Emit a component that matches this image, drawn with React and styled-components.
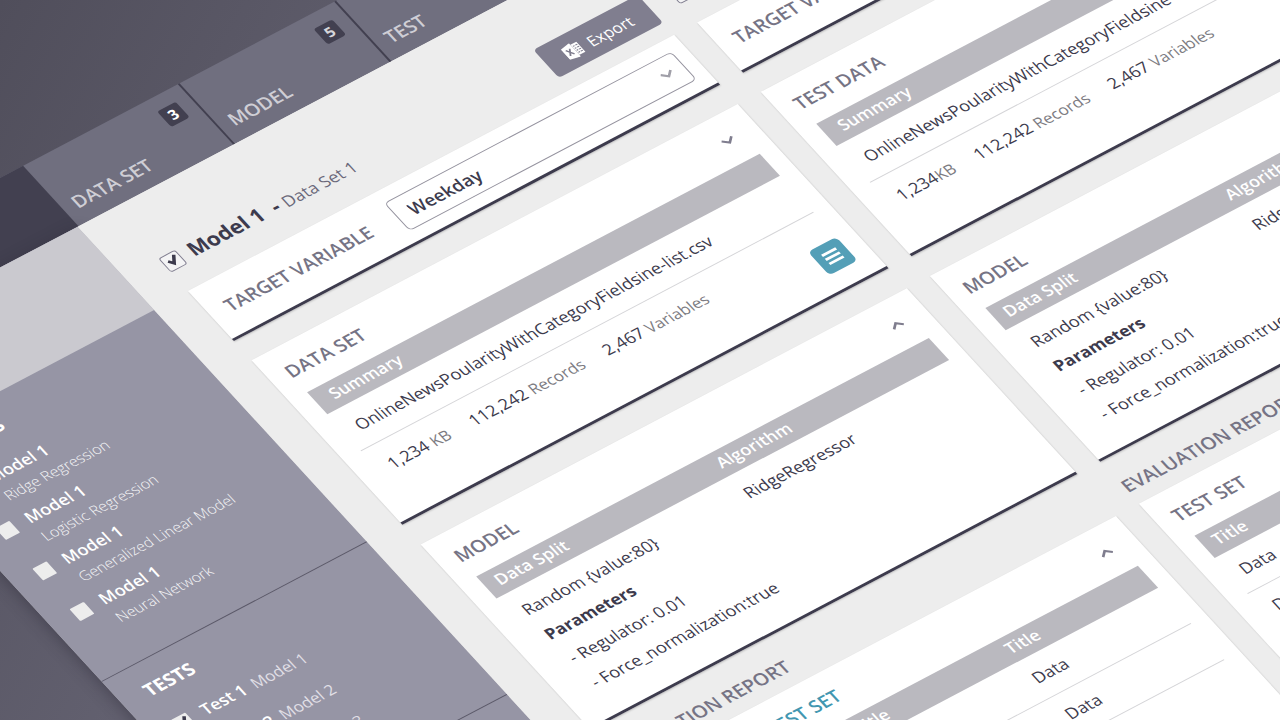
import { useState } from 'react'
import styled, { createGlobalStyle } from 'styled-components'

const GlobalStyle = createGlobalStyle`
  * {
    box-sizing: border-box;
  }
  body {
    margin: 0;
    overflow: hidden;
    font-family: 'Open Sans', 'Noto Sans', sans-serif;
    color: #3d3b4d;
  }
  h1, h2, p, ul {
    margin: 0;
    padding: 0;
  }
`

const Scene = styled.div`
  height: 100vh;
  overflow: hidden;
  background: linear-gradient(118deg, #504e5b 0%, #62606f 30%, #605f6e 100%);
`

// the whole dashboard lies on one tilted plane
const Plane = styled.div`
  width: calc(100vw + 223px);
  transform-origin: 0 0;
  transform: matrix(0.884, -0.466, 0.6765, 0.737, -243, 306);
`

const Header = styled.header`
  display: flex;
  height: 82px;
  background: #706f7f;
`

const Brand = styled.div`
  flex: 0 0 301px;
  background: #424050;
`

const Tab = styled.a`
  display: flex;
  flex-direction: column;
  justify-content: space-between;
  width: 177px;
  padding: 15px 14px 11px 12px;
  border-right: 2px solid #424050;
  font-size: 19px;
  font-weight: 600;
  line-height: 24px;
  color: #cfced5;
  text-decoration: none;
`

const Badge = styled.span`
  align-self: flex-end;
  width: 21px;
  height: 21px;
  border-radius: 3px;
  background: #424050;
  color: ${props => props.$active ? '#ffffff' : '#d6d5da'};
  font-size: 15px;
  font-weight: 700;
  line-height: 21px;
  text-align: center;
`

const Main = styled.div`
  display: flex;
  background: #ededed;
`

const Sidebar = styled.aside`
  flex: 0 0 300px;
  background: #9695a5;
  color: #ffffff;
  box-shadow: -2px 4px 16px rgba(40, 38, 52, 0.45);
`

const SideTop = styled.div`
  height: 113px;
  background: #cac9cf;
`

const SideSection = styled.section`
  padding: 18px 26px ${props => props.$tight ? '18px' : '32px'};
  border-bottom: 1px solid #5b5969;
`

const SideTitle = styled.h2`
  font-size: 19px;
  font-weight: 700;
  line-height: 24px;
  margin-bottom: 20px;
`

const SideList = styled.ul`
  list-style: none;
`

const SideItem = styled.li`
  display: flex;
  gap: 14px;
  height: ${props => props.$tall ? '55px' : '42px'};
  padding-top: 1px;
`

const SideLabel = styled.label`
  font-size: 17px;
  font-weight: 600;
  line-height: 24px;
`

const SubText = styled.span`
  display: block;
  font-size: 15px;
  font-weight: 300;
  line-height: 24px;
  color: #f4f4f6;
`

const AsideText = styled.span`
  margin-left: 8px;
  font-size: 16px;
  font-weight: 400;
  color: #e0dfe6;
`

const CheckWrap = styled.span`
  display: grid;
  flex: none;
  place-items: center;
  width: ${props => props.$size}px;
  height: ${props => props.$size}px;
  margin-top: ${props => props.$top || 0}px;

  input, svg {
    grid-area: 1 / 1;
  }
  svg {
    pointer-events: none;
  }
`

const Check = styled.input`
  appearance: none;
  width: 100%;
  height: 100%;
  margin: 0;
  border: ${props => props.$outlined ? '1px solid #807e90' : '0'};
  border-radius: ${props => props.$outlined ? '3px' : '1px'};
  background: ${props => props.$outlined ? '#f4f4f5' : '#ededed'};
`

const Board = styled.main`
  position: relative;
  flex: 1;
  display: flex;
  gap: 26px;
  padding: 0 39px 60px;
  background: #ededed;
`

const Column = styled.div`
  flex: 1;
  min-width: 0;
`

const ColumnHead = styled.div`
  display: flex;
  align-items: flex-end;
  height: 112px;
  padding: 58px 0 16px;
`

const ModelLabel = styled.label`
  display: flex;
  align-items: center;
  align-self: center;
  gap: 10px;
  font-size: 21px;
  line-height: 28px;
  font-weight: 700;
  white-space: pre;
`

const ModelSet = styled.span`
  font-size: 17px;
  font-weight: 400;
  color: #6a687a;
`

const ExportButton = styled.button`
  display: flex;
  align-items: center;
  justify-content: center;
  gap: 8px;
  width: 118px;
  height: 38px;
  margin-left: auto;
  padding: 2px 0 0;
  border: 0;
  border-radius: 4px;
  background: #807e8f;
  color: #ffffff;
  font-family: inherit;
  font-size: 16px;
`

const Card = styled.section`
  margin-bottom: 27px;
  padding: 0 18px 0 20px;
  border-bottom: 3px solid #3d3b4d;
  background: #ffffff;
  box-shadow: 0 1px 2px rgba(0, 0, 0, 0.2);
`

const TargetCard = styled(Card)`
  display: flex;
  align-items: center;
  justify-content: space-between;
  height: 68px;
  margin-bottom: 26px;
  padding: 0 14px 0 18px;
`

const ReportCard = styled(Card)`
  padding-bottom: 60px;
`

const CardHead = styled.div`
  display: flex;
  align-items: center;
  gap: 24px;
  height: 56px;
  margin-left: -2px;
  padding: 2px 8px 0 0;

  button {
    margin-left: auto;
  }
`

const CardTitle = styled.h2`
  font-size: 19px;
  font-weight: 600;
  line-height: 24px;
  color: ${props => props.$active ? '#4397b1' : '#767485'};
`

const SelectWrap = styled.div`
  display: grid;
  align-items: center;
  width: 325px;

  select, svg {
    grid-area: 1 / 1;
  }
  svg {
    justify-self: end;
    margin-right: 12px;
    pointer-events: none;
  }
`

const Select = styled.select`
  appearance: none;
  width: 100%;
  height: 38px;
  padding: 0 14px;
  border: 1px solid #95939f;
  border-radius: 5px;
  background: #ffffff;
  color: #3d3b4d;
  font-family: inherit;
  font-size: 18px;
  font-weight: 600;
`

const IconButton = styled.button`
  display: flex;
  padding: 0;
  border: 0;
  background: none;
`

const Bar = styled.p`
  height: 30px;
  padding: 0 16px;
  background: #bab9bf;
  color: #ffffff;
  font-size: 17px;
  font-weight: 600;
  line-height: 28px;
`

const FileName = styled.p`
  height: 50px;
  padding: 0 14px;
  border-bottom: 1px solid #d5d5d8;
  font-size: 17px;
  line-height: 50px;
`

const Stats = styled.div`
  display: flex;
  gap: 24px;
  height: 84px;
  padding: 14px 0 19px 12px;
  font-size: 17px;
  line-height: 24px;
  white-space: nowrap;
`

const Unit = styled.span`
  color: #7d7c82;
  font-size: 16px;
`

const ListButton = styled.button`
  display: grid;
  place-items: center;
  align-self: flex-end;
  width: 32px;
  height: 32px;
  margin-left: auto;
  padding: 0;
  border: 0;
  border-radius: 5px;
  background: #549fb7;
`

const Table = styled.table`
  display: block;
  font-size: 17px;
  text-align: left;

  thead, tbody {
    display: block;
  }
  tr {
    display: flex;
  }
  thead tr {
    background: #bab9bf;
  }
  th, td {
    flex: 1;
    padding: 0 12px;
  }
  th {
    height: 30px;
    color: #ffffff;
    font-weight: 600;
    line-height: 28px;
  }
`

const ModelTable = styled(Table)`
  th:first-child, td:first-child {
    flex: 0 0 49%;
  }
  td {
    height: 163px;
    padding-top: 8px;
    line-height: 33px;
  }
`

const DataTable = styled(Table)`
  tbody tr {
    height: 49px;
    border-bottom: 1px solid #d5d5d8;
    line-height: 48px;
  }
  tbody tr:last-child {
    border-bottom: 0;
  }
`

const Param = styled.div`
  padding-left: 2px;
`

const ReportTitle = styled.h2`
  margin-top: -4px;
  padding-bottom: 10px;
  font-size: 19px;
  font-weight: 600;
  line-height: 24px;
  color: #767485;
`

const Chevron = ({ up, color = '#7f7d8e' }) => (
  <svg width="14" height="10" viewBox="0 0 14 10" fill="none" stroke={color} strokeWidth="2.4">
    <path d={up ? 'M1.5 7.5 7 2.5l5.500 5' : 'M1.5 2.500 7 7.500l5.500-5'} />
  </svg>
)

const Tick = ({ size }) => (
  <svg width={size} height={size} viewBox="0 0 14 14" fill="none" stroke="#3d3b4d" strokeWidth="3.2">
    <path d="M2.500 5.500 6 10 11.500 2" />
  </svg>
)

const ExcelIcon = () => (
  <svg width="18" height="18" viewBox="0 0 20 20">
    <path d="M0 2.500 12 0v20L0 17.500z" fill="#ffffff" />
    <path d="M12 2.500h7.500v15H12" fill="#ffffff" />
    <path d="M13 5.500h2M16 5.500h2.500M13 8.500h2M16 8.500h2.500M13 11.500h2M16 11.500h2.500M13 14.500h2M16 14.500h2.500" stroke="#807e8f" strokeWidth="1.300" />
    <path d="M3.500 6 8.500 14M8.500 6 3.500 14" stroke="#807e8f" strokeWidth="1.800" />
  </svg>
)

const ListIcon = () => (
  <svg width="18" height="16" viewBox="0 0 18 16" stroke="#ffffff" strokeWidth="2.800">
    <path d="M1 2.500h16M1 8h16M1 13.500h16" />
  </svg>
)

const models = ['Ridge Regression', 'Logistic Regression', 'Generalized Linear Model', 'Neural Network']

const columns = [
  { name: 'Model 1', set: 'Data Set 1', dataTitle: 'DATA SET', size: '1,234 ', checked: true },
  { name: 'Model 2', set: 'Data Set 1', dataTitle: 'TEST DATA', size: '1,234', checked: false },
]

function ModelColumn({ item, index }) {
  const [checked, setChecked] = useState(item.checked)
  const first = index === 0

  return (
    <Column>
      <ColumnHead>
        <ModelLabel>
          <CheckWrap $size={19}>
            <Check type="checkbox" $outlined checked={checked} onChange={() => setChecked(!checked)} />
            {checked && <Tick size={14} />}
          </CheckWrap>
          <span>{item.name}{'  - '}<ModelSet>{item.set}</ModelSet></span>
        </ModelLabel>
        <ExportButton><ExcelIcon />Export</ExportButton>
      </ColumnHead>

      <TargetCard>
        <CardTitle as="label" htmlFor={`target-${index}`}>TARGET VARIABLE</CardTitle>
        <SelectWrap>
          <Select id={`target-${index}`}>
            <option>Weekday</option>
          </Select>
          <Chevron color="#a09fa8" />
        </SelectWrap>
      </TargetCard>

      <Card>
        <CardHead>
          <CardTitle>{item.dataTitle}</CardTitle>
          <IconButton aria-label="Expand"><Chevron /></IconButton>
        </CardHead>
        <Bar>Summary</Bar>
        <FileName>OnlineNewsPoularityWithCategoryFieldsine-list.csv</FileName>
        <Stats>
          <span>{item.size}<Unit>KB</Unit></span>
          <span>112,242 <Unit>Records</Unit></span>
          <span>2,467 <Unit>Variables</Unit></span>
          {first && <ListButton aria-label="Details"><ListIcon /></ListButton>}
        </Stats>
      </Card>

      <Card>
        <CardHead>
          <CardTitle>MODEL</CardTitle>
          <IconButton aria-label="Collapse"><Chevron up /></IconButton>
        </CardHead>
        <ModelTable>
          <thead>
            <tr><th>Data Split</th><th>Algorithm</th></tr>
          </thead>
          <tbody>
            <tr>
              <td>
                <div>Random {'{value:80}'}</div>
                <strong>Parameters</strong>
                <Param>- Regulator: 0.01</Param>
                <Param>- Force_normalization:true</Param>
              </td>
              <td>RidgeRegressor</td>
            </tr>
          </tbody>
        </ModelTable>
      </Card>

      <ReportTitle>EVALUATION REPORT</ReportTitle>
      <ReportCard>
        <CardHead>
          {first && <CardTitle>TRAIN SET</CardTitle>}
          <CardTitle $active={first}>TEST SET</CardTitle>
          <IconButton aria-label="Collapse"><Chevron up /></IconButton>
        </CardHead>
        <DataTable>
          <thead>
            <tr><th>Title</th><th>Title</th><th>Title</th></tr>
          </thead>
          <tbody>
            {[1, 2, 3].map(row => (
              <tr key={row}><td>Data</td><td>Data</td><td>Data</td></tr>
            ))}
          </tbody>
        </DataTable>
      </ReportCard>
    </Column>
  )
}

function App() {
  return (
    <Scene>
      <GlobalStyle />
      <Plane>
        <Header>
          <Brand />
          <Tab href="#data-set"><Badge $active>3</Badge>DATA SET</Tab>
          <Tab href="#model"><Badge>5</Badge>MODEL</Tab>
          <Tab href="#test">
            <span />
            TEST
          </Tab>
        </Header>
        <Main>
          <Sidebar>
            <SideTop />
            <SideSection>
              <SideTitle>MODELS</SideTitle>
              <SideList>
                {models.map((model, i) => (
                  <SideItem key={model} $tall>
                    <CheckWrap $size={16} $top={5}>
                      <Check type="checkbox" id={`model-${i}`} />
                    </CheckWrap>
                    <SideLabel htmlFor={`model-${i}`}>
                      Model 1
                      <SubText>{model}</SubText>
                    </SideLabel>
                  </SideItem>
                ))}
              </SideList>
            </SideSection>
            <SideSection $tight>
              <SideTitle>TESTS</SideTitle>
              <SideList>
                {[1, 2, 3].map(n => (
                  <SideItem key={n}>
                    <CheckWrap $size={16} $top={5}>
                      <Check type="checkbox" id={`test-${n}`} defaultChecked={n === 1} />
                      {n === 1 && <Tick size={14} />}
                    </CheckWrap>
                    <SideLabel htmlFor={`test-${n}`}>
                      Test {n}
                      <AsideText>Model {n}</AsideText>
                    </SideLabel>
                  </SideItem>
                ))}
              </SideList>
            </SideSection>
          </Sidebar>
          <Board>
            {columns.map((item, i) => <ModelColumn key={item.name} item={item} index={i} />)}
          </Board>
        </Main>
      </Plane>
    </Scene>
  )
}

export default App
